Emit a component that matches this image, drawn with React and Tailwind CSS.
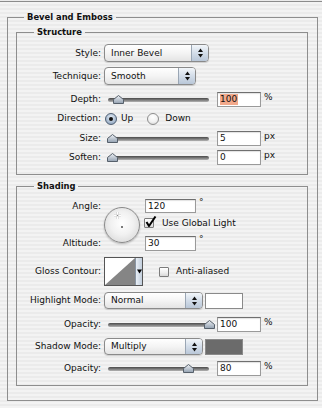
import React from "react";

function Select({ label, width = 105, height = 18 }) {
  return (
    <div
      className="relative rounded-[4px] border border-[#8a8a8a] bg-[linear-gradient(180deg,#ffffff_0%,#f4f4f4_50%,#e4e4e4_100%)] shadow-[0_1px_1px_rgba(0,0,0,0.15)] flex items-center pl-[6px] shrink-0"
      style={{ width, height }}
    >
      <span className="leading-none">{label}</span>
      <div className="absolute right-0 top-0 bottom-0 w-[17px] rounded-r-[3px] border-l border-[#9aa6b4] bg-[linear-gradient(180deg,#f2f6fa_0%,#d3dde9_50%,#b9c7d8_100%)] flex items-center justify-center">
        <svg width="7" height="10" viewBox="0 0 7 10">
          <path d="M3.5 0.5 L6 4 L1 4 Z" fill="#111" />
          <path d="M3.5 9.5 L6 6 L1 6 Z" fill="#111" />
        </svg>
      </div>
    </div>
  );
}

function Field({ value, selected = false, width = 44 }) {
  return (
    <div
      className="h-full bg-white border border-[#9a9a9a] border-t-[#6f6f6f] shadow-[inset_0_1px_1px_rgba(0,0,0,0.12)] flex items-center pl-[2px] shrink-0"
      style={{ width }}
    >
      {selected ? (
        <span className="bg-[#f2a98b] leading-[11px] pr-[1px]">{value}</span>
      ) : (
        <span className="leading-none">{value}</span>
      )}
    </div>
  );
}

function Slider({ pos }) {
  return (
    <div className="relative w-[101px] h-full flex items-center shrink-0">
      <div className="w-full h-[4px] mt-[1px] rounded-full bg-[linear-gradient(180deg,#4a4a4a_0%,#7a7a7a_50%,#b4b4b4_100%)]" />
      <svg
        className="absolute top-[calc(50%-5px)]"
        style={{ left: pos - 5.5 }}
        width="11"
        height="9"
        viewBox="0 0 11 9"
      >
        <defs>
          <linearGradient id="thumbg" x1="0" y1="0" x2="0" y2="1">
            <stop offset="0" stopColor="#eef1f5" />
            <stop offset="1" stopColor="#93a1b1" />
          </linearGradient>
        </defs>
        <path d="M5.5 0.5 L10.5 4.5 L10.5 8.5 L0.5 8.5 L0.5 4.5 Z" fill="url(#thumbg)" stroke="#56606b" strokeWidth="1" />
      </svg>
    </div>
  );
}

function Radio({ checked }) {
  return checked ? (
    <div className="w-[12px] h-[12px] rounded-full border border-[#4f5f73] bg-[radial-gradient(circle_at_50%_35%,#e6eef7_0%,#a9bbd0_60%,#7f95ae_100%)] flex items-center justify-center shrink-0">
      <div className="w-[4px] h-[4px] rounded-full bg-[#111]" />
    </div>
  ) : (
    <div className="w-[12px] h-[12px] rounded-full border border-[#8d8d8d] bg-[radial-gradient(circle_at_50%_30%,#ffffff_0%,#f2f2f2_55%,#d0d0d0_100%)] shrink-0" />
  );
}

function Checkbox({ checked }) {
  return (
    <div className="relative w-[10px] h-[10px] border border-[#7c7c7c] rounded-[1px] bg-[linear-gradient(180deg,#ffffff_0%,#ededed_60%,#d8d8d8_100%)] shrink-0">
      {checked && (
        <svg className="absolute left-[0px] top-[-3px]" width="12" height="12" viewBox="0 0 12 12">
          <path d="M1.5 6 L4 10 L10.5 0.5" fill="none" stroke="#000" strokeWidth="2" strokeLinejoin="round" />
        </svg>
      )}
    </div>
  );
}

function Lbl({ children, className = "" }) {
  return <div className={"w-[84px] text-right shrink-0 leading-none whitespace-nowrap " + className}>{children}</div>;
}

export default function App() {
  return (
    <div className="w-[322px] h-[408px] overflow-hidden bg-[image:repeating-linear-gradient(180deg,#ebebeb_0px,#ebebeb_2px,#f3f3f3_2px,#f3f3f3_4px)] font-['DejaVu_Sans',sans-serif] text-[9px] text-[#111]">
      <div className="h-[1px] mt-[1px] bg-[#8c8c8c]" />
      <fieldset className="ml-[7px] mt-[9px] w-[311px] h-[390px] border border-[#8e8e8e] pl-[8px] pr-[9px] pt-[3px]">
        <legend className="ml-[8px] px-[3px] font-bold text-[8.4px] leading-[12px]">Bevel and Emboss</legend>

        {/* Structure */}
        <fieldset className="w-[292px] h-[149px] border border-[#8e8e8e]">
          <legend className="ml-[17px] px-[3px] font-bold text-[8.4px] leading-[12px]">Structure</legend>
          <div className="flex items-center h-[18px] mt-[6px]">
            <Lbl>Style:</Lbl>
            <div className="ml-[3px]">
              <Select label="Inner Bevel" width={105} height={18} />
            </div>
          </div>
          <div className="flex items-center h-[18px] mt-[5px]">
            <Lbl>Technique:</Lbl>
            <div className="ml-[3px]">
              <Select label="Smooth" width={92} height={18} />
            </div>
          </div>
          <div className="flex items-center h-[15px] mt-[7px]">
            <Lbl>Depth:</Lbl>
            <div className="ml-[7px] h-full flex">
              <Slider pos={10} />
            </div>
            <div className="ml-[8px] h-full flex">
              <Field value="100" selected />
            </div>
            <div className="ml-[3px] self-start mt-[1px] leading-none">%</div>
          </div>
          <div className="flex items-center h-[13px] mt-[5px]">
            <Lbl>Direction:</Lbl>
            <div className="ml-[4px]">
              <Radio checked />
            </div>
            <div className="ml-[4px] leading-none">Up</div>
            <div className="ml-[14px]">
              <Radio />
            </div>
            <div className="ml-[6px] leading-none">Down</div>
          </div>
          <div className="flex items-center h-[15px] mt-[6px]">
            <Lbl>Size:</Lbl>
            <div className="ml-[7px] h-full flex">
              <Slider pos={4.5} />
            </div>
            <div className="ml-[8px] h-full flex">
              <Field value="5" />
            </div>
            <div className="ml-[3px] self-start mt-[1px] leading-none">px</div>
          </div>
          <div className="flex items-center h-[15px] mt-[4px]">
            <Lbl>Soften:</Lbl>
            <div className="ml-[7px] h-full flex">
              <Slider pos={4.5} />
            </div>
            <div className="ml-[8px] h-full flex">
              <Field value="0" />
            </div>
            <div className="ml-[3px] self-start mt-[1px] leading-none">px</div>
          </div>
        </fieldset>

        {/* Shading */}
        <fieldset className="mt-[5px] w-[292px] h-[206px] border border-[#8e8e8e]">
          <legend className="ml-[17px] px-[3px] font-bold text-[8.4px] leading-[12px]">Shading</legend>

          <div className="flex mt-[7px] h-[52px]">
            <div className="w-[84px] shrink-0 flex flex-col justify-between">
              <div className="h-[14px] flex items-center justify-end leading-none">Angle:</div>
              <div className="h-[15px] flex items-center justify-end leading-none">Altitude:</div>
            </div>
            <div className="ml-[3px] mt-[8px] relative w-[36px] h-[36px] rounded-full border border-[#8a8a8a] bg-[radial-gradient(circle_at_50%_45%,#ffffff_0%,#f1f1f1_45%,#d9d9d9_85%,#c4c4c4_100%)] shadow-[0_1px_2px_rgba(0,0,0,0.25)] shrink-0">
              <svg className="absolute left-[9px] top-[4px]" width="7" height="7" viewBox="0 0 7 7">
                <path d="M3.5 0 V7 M0 3.5 H7" stroke="#b0b0b0" strokeWidth="2.2" opacity="0.5" />
                <path d="M3.5 0 V7 M0 3.5 H7" stroke="#ffffff" strokeWidth="1" />
                <circle cx="3.5" cy="3.5" r="0.8" fill="#8a8a8a" />
              </svg>
              <div className="absolute left-[16px] top-[18px] w-[2px] h-[2px] bg-[#7a7a7a]" />
            </div>
            <div className="ml-[5px] flex flex-col">
              <div className="flex h-[14px]">
                <Field value="120" width={51} />
                <div className="ml-[3px] leading-none -mt-[1px]">°</div>
              </div>
              <div className="flex items-center mt-[5px] h-[10px]">
                <div className="-ml-[1px]">
                  <Checkbox checked />
                </div>
                <div className="ml-[8px] leading-none whitespace-nowrap">Use Global Light</div>
              </div>
              <div className="flex h-[15px] mt-[8px]">
                <Field value="30" width={51} />
                <div className="ml-[3px] leading-none -mt-[1px]">°</div>
              </div>
            </div>
          </div>

          <div className="flex items-center h-[29px] mt-[6px]">
            <Lbl>Gloss Contour:</Lbl>
            <div className="ml-[3px] relative w-[39px] h-[29px] border border-[#555] bg-white shrink-0 flex">
              <svg width="30" height="27" viewBox="0 0 30 27" className="shrink-0">
                <polygon points="0,27 30,0 30,27" fill="#858585" />
              </svg>
              <div className="w-[7px] h-full border-l border-[#8a96a4] bg-[linear-gradient(90deg,#e8eef5_0%,#c3cfdd_100%)] flex items-center justify-center">
                <svg width="5" height="5" viewBox="0 0 5 5">
                  <path d="M0 0.5 H5 L2.5 4.5 Z" fill="#000" />
                </svg>
              </div>
            </div>
            <div className="ml-[16px]">
              <Checkbox />
            </div>
            <div className="ml-[7px] leading-none">Anti-aliased</div>
          </div>

          <div className="flex items-center h-[17px] mt-[6px]">
            <Lbl>Highlight Mode:</Lbl>
            <div className="ml-[3px]">
              <Select label="Normal" width={99} height={17} />
            </div>
            <div className="ml-[2px] w-[38px] h-[16px] bg-white border border-[#8a8a8a]" />
          </div>

          <div className="flex items-center h-[15px] mt-[8px]">
            <Lbl>Opacity:</Lbl>
            <div className="ml-[7px] h-full flex">
              <Slider pos={101} />
            </div>
            <div className="ml-[8px] h-full flex">
              <Field value="100" />
            </div>
            <div className="ml-[3px] self-start mt-[1px] leading-none">%</div>
          </div>

          <div className="flex items-center h-[17px] mt-[6px]">
            <Lbl>Shadow Mode:</Lbl>
            <div className="ml-[3px]">
              <Select label="Multiply" width={99} height={17} />
            </div>
            <div className="ml-[2px] w-[38px] h-[16px] bg-[#6b6b6b] border border-[#8a8a8a]" />
          </div>

          <div className="flex items-center h-[15px] mt-[6px]">
            <Lbl>Opacity:</Lbl>
            <div className="ml-[7px] h-full flex">
              <Slider pos={80} />
            </div>
            <div className="ml-[8px] h-full flex">
              <Field value="80" />
            </div>
            <div className="ml-[3px] self-start mt-[1px] leading-none">%</div>
          </div>
        </fieldset>
      </fieldset>
    </div>
  );
}
